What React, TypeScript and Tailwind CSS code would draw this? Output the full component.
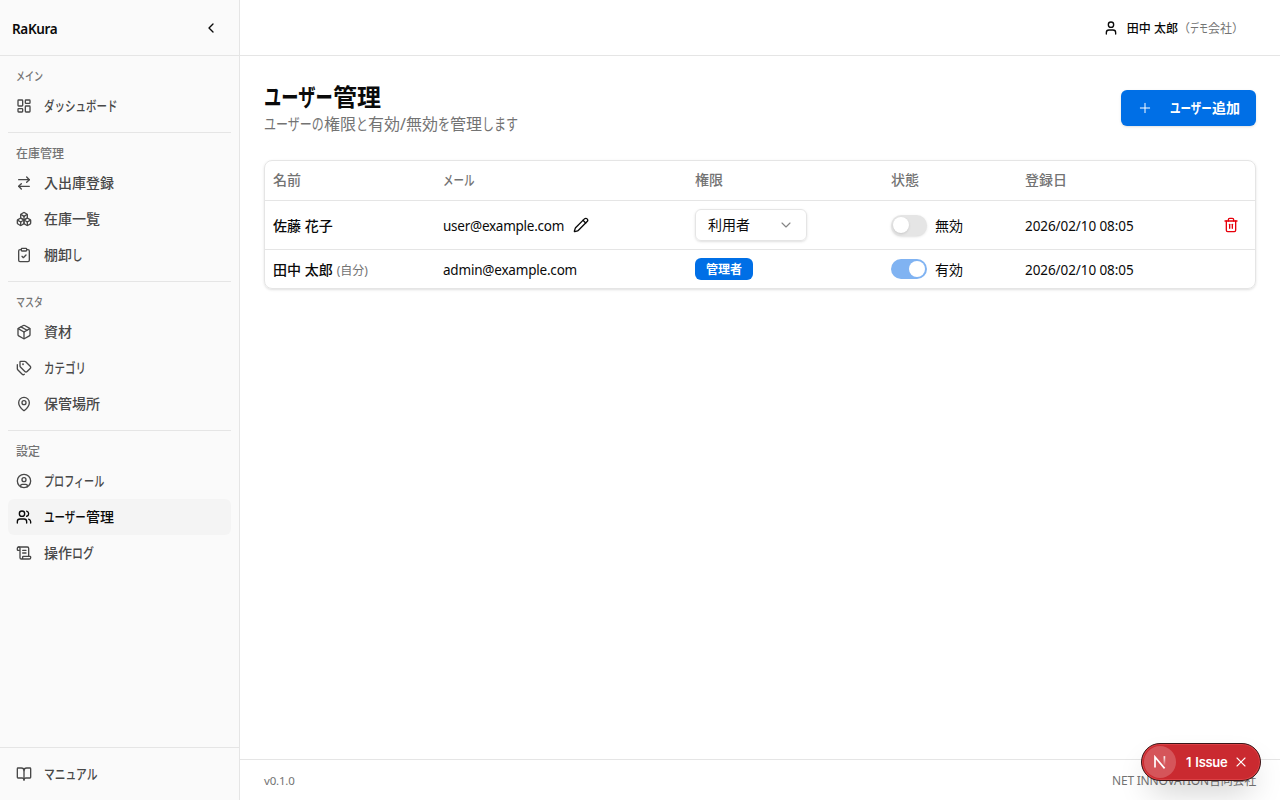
import React from "react";
import {
  ArrowRightLeft,
  BookOpen,
  Boxes,
  ChevronDown,
  ChevronLeft,
  CircleUser,
  ClipboardCheck,
  LayoutDashboard,
  MapPin,
  Package,
  Pencil,
  Plus,
  ScrollText,
  Tags,
  Trash2,
  User,
  Users,
  X,
  type LucideIcon,
} from "lucide-react";

/** Japanese UI text with condensed kana and full-width kanji. */
function Ja({ children, ratio = 0.75 }: { children: string; ratio?: number }) {
  const runs = children.split(/([\u3040-\u30ff]+)/).filter(Boolean);
  return (
    <span className="whitespace-pre">
      {runs.map((run, i) =>
        /[\u3040-\u30ff]/.test(run) ? (
          <span key={i} className="inline-block" style={{ width: `${run.length * ratio}em` }}>
            <span className="inline-block origin-left" style={{ transform: `scaleX(${ratio})` }}>
              {run}
            </span>
          </span>
        ) : (
          <span key={i}>{run}</span>
        ),
      )}
    </span>
  );
}

type Item = { label: string; icon: LucideIcon; active?: boolean; ratio?: number };

const groups: { title: string; items: Item[] }[] = [
  { title: "メイン", items: [{ label: "ダッシュボード", icon: LayoutDashboard }] },
  {
    title: "在庫管理",
    items: [
      { label: "入出庫登録", icon: ArrowRightLeft },
      { label: "在庫一覧", icon: Boxes },
      { label: "棚卸し", icon: ClipboardCheck },
    ],
  },
  {
    title: "マスタ",
    items: [
      { label: "資材", icon: Package },
      { label: "カテゴリ", icon: Tags },
      { label: "保管場所", icon: MapPin },
    ],
  },
  {
    title: "設定",
    items: [
      { label: "プロフィール", icon: CircleUser, ratio: 0.72 },
      { label: "ユーザー管理", icon: Users, active: true },
      { label: "操作ログ", icon: ScrollText, ratio: 0.78 },
    ],
  },
];

function NavItem({ label, icon: Icon, active, ratio }: Item) {
  return (
    <a
      className={
        active
          ? "flex h-9 items-center gap-3 rounded-md bg-[#f4f4f4] px-2 text-sm font-medium text-[#0a0a0a]"
          : "flex h-9 items-center gap-3 rounded-md px-2 text-sm font-medium text-[#484848]"
      }
    >
      <Icon className="size-4 shrink-0" />
      <Ja ratio={ratio}>{label}</Ja>
    </a>
  );
}

function Toggle({ on }: { on?: boolean }) {
  return on ? (
    <span className="flex h-5 w-9 items-center justify-end rounded-full bg-[#80b3f2] px-0.5">
      <span className="size-4 rounded-full bg-white" />
    </span>
  ) : (
    <span className="flex h-[21px] w-9 items-center rounded-full bg-[#e5e5e5] px-0.5 shadow-sm">
      <span className="size-4 rounded-full bg-white shadow-sm" />
    </span>
  );
}

const rowGrid = "grid grid-cols-[170px_252px_196px_134px_1fr] items-center *:px-2";

export default function App() {
  return (
    <div className="flex h-[800px] w-[1280px] overflow-hidden bg-white font-['Noto_Sans','Noto_Sans_CJK_JP',sans-serif] text-sm text-[#0a0a0a]">
      <aside className="flex w-60 shrink-0 flex-col border-r border-[#e5e5e5] bg-[#fafafa]">
        <div className="flex h-14 shrink-0 items-center justify-between border-b border-[#e5e5e5] pr-5 pl-3">
          <span className="pt-[5px] text-[13.5px] font-semibold tracking-[-0.35px]">RaKura</span>
          <ChevronLeft className="size-4" />
        </div>
        <nav className="flex flex-1 flex-col p-2">
          {groups.map((g, i) => (
            <div key={g.title} className={i > 0 ? "mt-2 border-t border-[#e5e5e5] pt-2" : ""}>
              <div className="flex h-6 items-center px-2 pt-0.5 text-xs font-medium text-[#737373]">
                <Ja>{g.title}</Ja>
              </div>
              {g.items.map((item) => (
                <NavItem key={item.label} {...item} />
              ))}
            </div>
          ))}
        </nav>
        <div className="border-t border-[#e5e5e5] p-2">
          <NavItem label="マニュアル" icon={BookOpen} ratio={0.77} />
        </div>
      </aside>

      <div className="flex min-w-0 flex-1 flex-col">
        <header className="flex h-14 shrink-0 items-center justify-end border-b border-[#e5e5e5] pr-9">
          <User className="mr-2 size-4" />
          <span className="pt-0.5 text-xs font-medium">田中 太郎</span>
          <span className="pt-0.5 text-xs text-[#737373]">
            <Ja>（デモ会社）</Ja>
          </span>
        </header>

        <main className="flex-1 px-6 pt-6">
          <div className="flex h-[56px] items-center justify-between">
            <div>
              <h1 className="h-[31px] text-2xl leading-[32px] font-semibold">
                <Ja ratio={0.72}>ユーザー管理</Ja>
              </h1>
              <p className="h-[23px] text-base leading-6 text-[#737373]">
                <Ja>ユーザーの権限と有効/無効を管理します</Ja>
              </p>
            </div>
            <button className="flex h-9 w-[135px] items-center justify-between rounded-md bg-[#006fe6] px-4 text-sm font-semibold text-white shadow-sm">
              <Plus className="size-4" strokeWidth={1.5} />
              <Ja>ユーザー追加</Ja>
            </button>
          </div>

          <section className="mt-6 overflow-hidden rounded-lg border border-[#e5e5e5] shadow-sm">
            <div className={`${rowGrid} h-10 border-b border-[#e5e5e5] pb-px font-medium text-[#737373]`}>
              <span>名前</span>
              <span>
                <Ja>メール</Ja>
              </span>
              <span>権限</span>
              <span>状態</span>
              <span>登録日</span>
            </div>
            <div className={`${rowGrid} h-[49px] border-b border-[#e5e5e5]`}>
              <span className="pt-px font-medium">佐藤 花子</span>
              <span className="flex items-center gap-2">
                <span className="w-[122px] pt-1 text-[13.5px] tracking-[-0.25px]">user@example.com</span>
                <Pencil className="size-4" />
              </span>
              <span>
                <span className="flex h-8 w-28 items-center justify-between rounded-md border border-[#e5e5e5] px-3 shadow-sm">
                  利用者
                  <ChevronDown className="size-4 text-[#858585]" strokeWidth={1.7} />
                </span>
              </span>
              <span className="flex items-center gap-2">
                <Toggle />
                <span className="pt-px">無効</span>
              </span>
              <span className="flex items-center justify-between">
                <span className="pt-1 text-[13.5px] tracking-[-0.08px]">2026/02/10 08:05</span>
                <Trash2 className="mr-2 size-4 text-[#e7000b]" />
              </span>
            </div>
            <div className={`${rowGrid} h-[38px]`}>
              <span className="flex items-center gap-1">
                <span className="pt-px font-medium">田中 太郎</span>
                <span className="pt-[3px] text-xs text-[#737373]">(自分)</span>
              </span>
              <span className="pt-1 text-[13.5px] tracking-[-0.2px]">admin@example.com</span>
              <span>
                <span className="flex h-[22px] w-[58px] items-center justify-center rounded-md bg-[#006fe6] pt-0.5 text-xs font-semibold text-white">
                  管理者
                </span>
              </span>
              <span className="flex items-center gap-2">
                <Toggle on />
                <span className="pt-px">有効</span>
              </span>
              <span className="pt-1 text-[13.5px] tracking-[-0.08px]">2026/02/10 08:05</span>
            </div>
          </section>
        </main>

        <footer className="flex h-[41px] shrink-0 items-center justify-between border-t border-[#e5e5e5] px-6 pt-0.5 text-xs text-[#737373]">
          <span className="text-[11.5px] tracking-[-0.2px]">v0.1.0</span>
          <span className="tracking-[-0.22px]">NET INNOVATION合同会社</span>
        </footer>
      </div>

      <div className="absolute top-[743px] left-[1141px] flex h-[38px] w-[120px] items-center rounded-full border border-[#3a1719] bg-[#ca2a30] pl-[2px] font-['Inter',sans-serif] text-white shadow-[inset_0_0_0_1px_#dc4044,0_16px_32px_-8px_rgba(0,0,0,0.24)]">
        <span className="flex size-8 items-center justify-center rounded-full bg-[#d5555a]">
          <svg viewBox="0 0 14 14" className="size-[14px]" fill="none">
            <defs>
              <linearGradient id="nFade" x1="0" y1="1" x2="0" y2="13" gradientUnits="userSpaceOnUse">
                <stop stopColor="white" />
                <stop offset="0.8" stopColor="white" stopOpacity="0" />
              </linearGradient>
            </defs>
            <path d="M2 12.5V2L11.6 13.4" stroke="white" strokeWidth="1.7" />
            <path d="M11.4 1.2V10" stroke="url(#nFade)" strokeWidth="1.7" />
          </svg>
        </span>
        <span className="ml-[10px] text-[13px] font-semibold tracking-[-0.3px] [word-spacing:1.2px]">1 Issue</span>
        <X className="ml-[6px] size-4" strokeWidth={1.6} />
      </div>
    </div>
  );
}
